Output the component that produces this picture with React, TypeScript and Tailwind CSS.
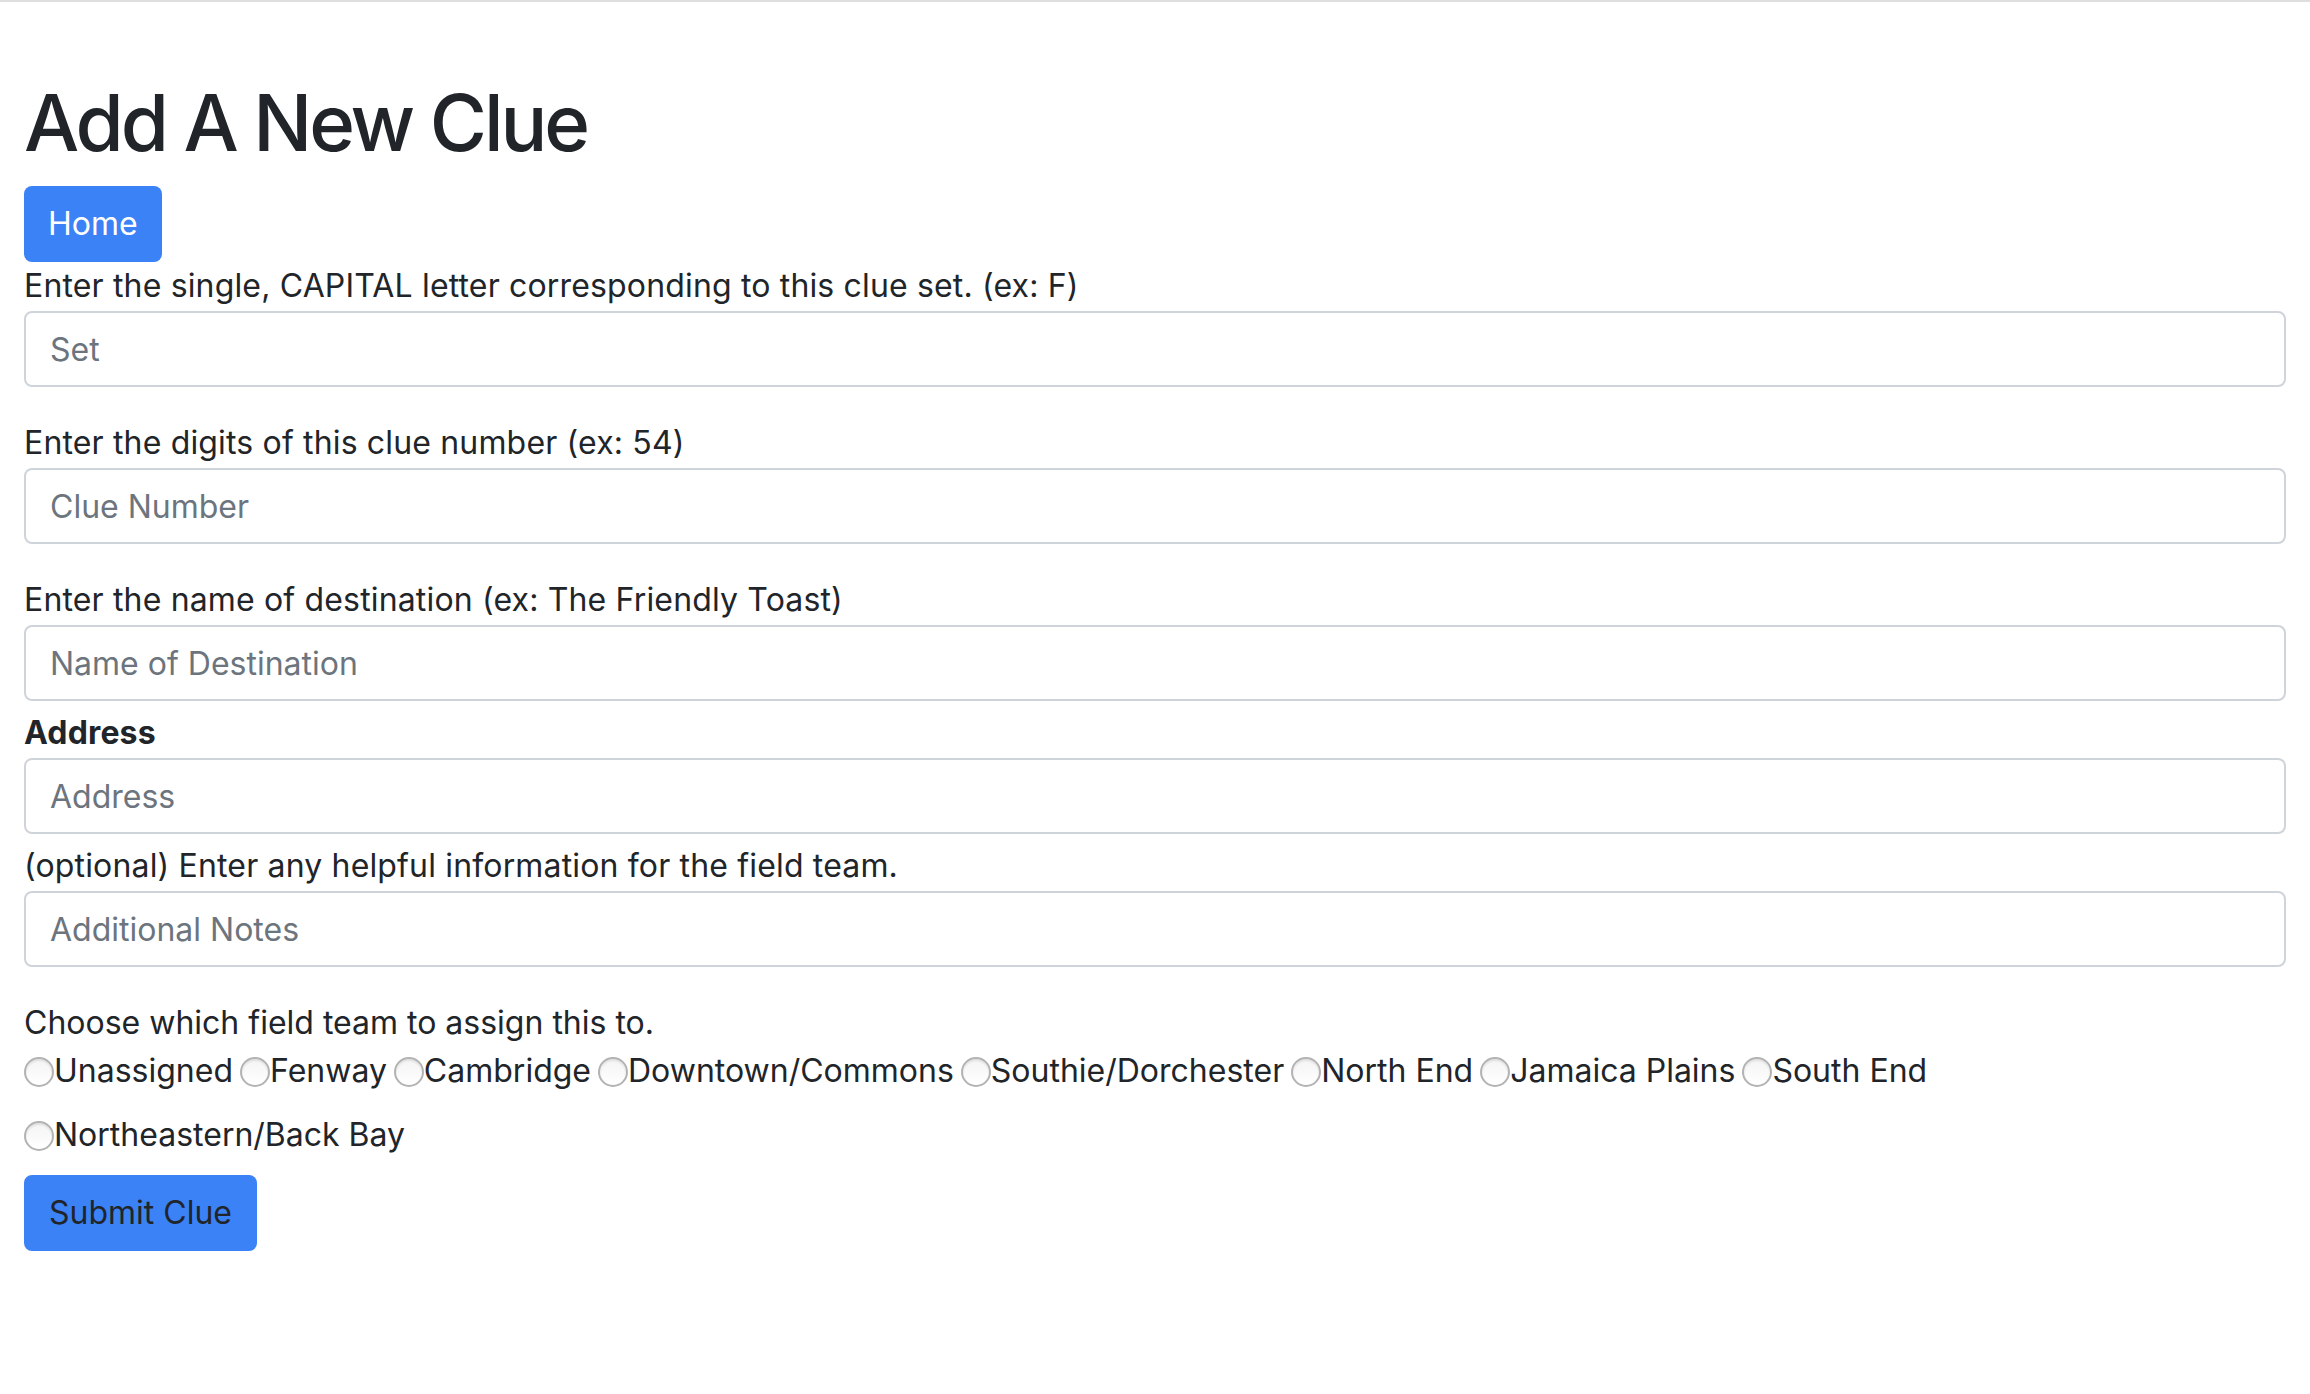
const teams = [
  'Unassigned',
  'Fenway',
  'Cambridge',
  'Downtown/Commons',
  'Southie/Dorchester',
  'North End',
  'Jamaica Plains',
  'South End',
];

function Radio({ label }: { label: string }) {
  return (
    <label className="inline-flex items-center">
      <input
        type="radio"
        name="team"
        className="appearance-none w-[30px] h-[30px] rounded-full border-2 border-[#b3b3b3] bg-gradient-to-b from-[#f4f4f4] to-white shadow-[inset_0_2px_2px_rgba(0,0,0,0.08)] m-0 mt-[2px]"
      />
      <span>{label}</span>
    </label>
  );
}

function Field({ label, placeholder, bold, gap }: { label: string; placeholder: string; bold?: boolean; gap: string }) {
  return (
    <div className={gap}>
      <div className={`h-[48px] leading-[48px] tracking-[0.005em] ${bold ? 'font-bold' : ''}`}>{label}</div>
      <input
        type="text"
        placeholder={placeholder}
        className="mt-[1px] block w-full h-[76px] px-[24px] border-2 border-[#ced4da] rounded-[8px] bg-white text-[32px] text-[#495057] placeholder:text-[#6c757d] outline-none"
      />
    </div>
  );
}

export default function App() {
  return (
    <div className="min-h-screen bg-white text-[#212529] text-[32px] font-['Inter',sans-serif]">
      <div className="h-[2px] bg-[#dedede]" />
      <div className="px-[24px] pt-[73px]">
        <h1 className="text-[78px] leading-[96px] font-medium tracking-[-0.04em] mb-[15px]">Add A New Clue</h1>
        <button className="h-[76px] px-[24px] rounded-[8px] bg-[#3b82f6] text-white text-[32px] leading-[48px]">
          Home
        </button>

        <Field gap="" label="Enter the single, CAPITAL letter corresponding to this clue set. (ex: F)" placeholder="Set" />
        <Field gap="mt-[32px]" label="Enter the digits of this clue number (ex: 54)" placeholder="Clue Number" />
        <Field gap="mt-[32px]" label="Enter the name of destination (ex: The Friendly Toast)" placeholder="Name of Destination" />
        <Field gap="mt-[8px]" bold label="Address" placeholder="Address" />
        <Field gap="mt-[8px]" label="(optional) Enter any helpful information for the field team." placeholder="Additional Notes" />

        <div className="mt-[32px] h-[48px] leading-[48px]">Choose which field team to assign this to.</div>
        <div className="flex flex-wrap gap-x-[7px] h-[48px] mb-[16px] leading-[48px]">
          {teams.map((t) => (
            <Radio key={t} label={t} />
          ))}
        </div>
        <div className="flex h-[48px] mb-[16px] leading-[48px]">
          <Radio label="Northeastern/Back Bay" />
        </div>
        <button className="h-[76px] px-[25px] rounded-[8px] bg-[#3b82f6] text-[#212529] text-[32px] leading-[48px]">
          Submit Clue
        </button>
      </div>
    </div>
  );
}
